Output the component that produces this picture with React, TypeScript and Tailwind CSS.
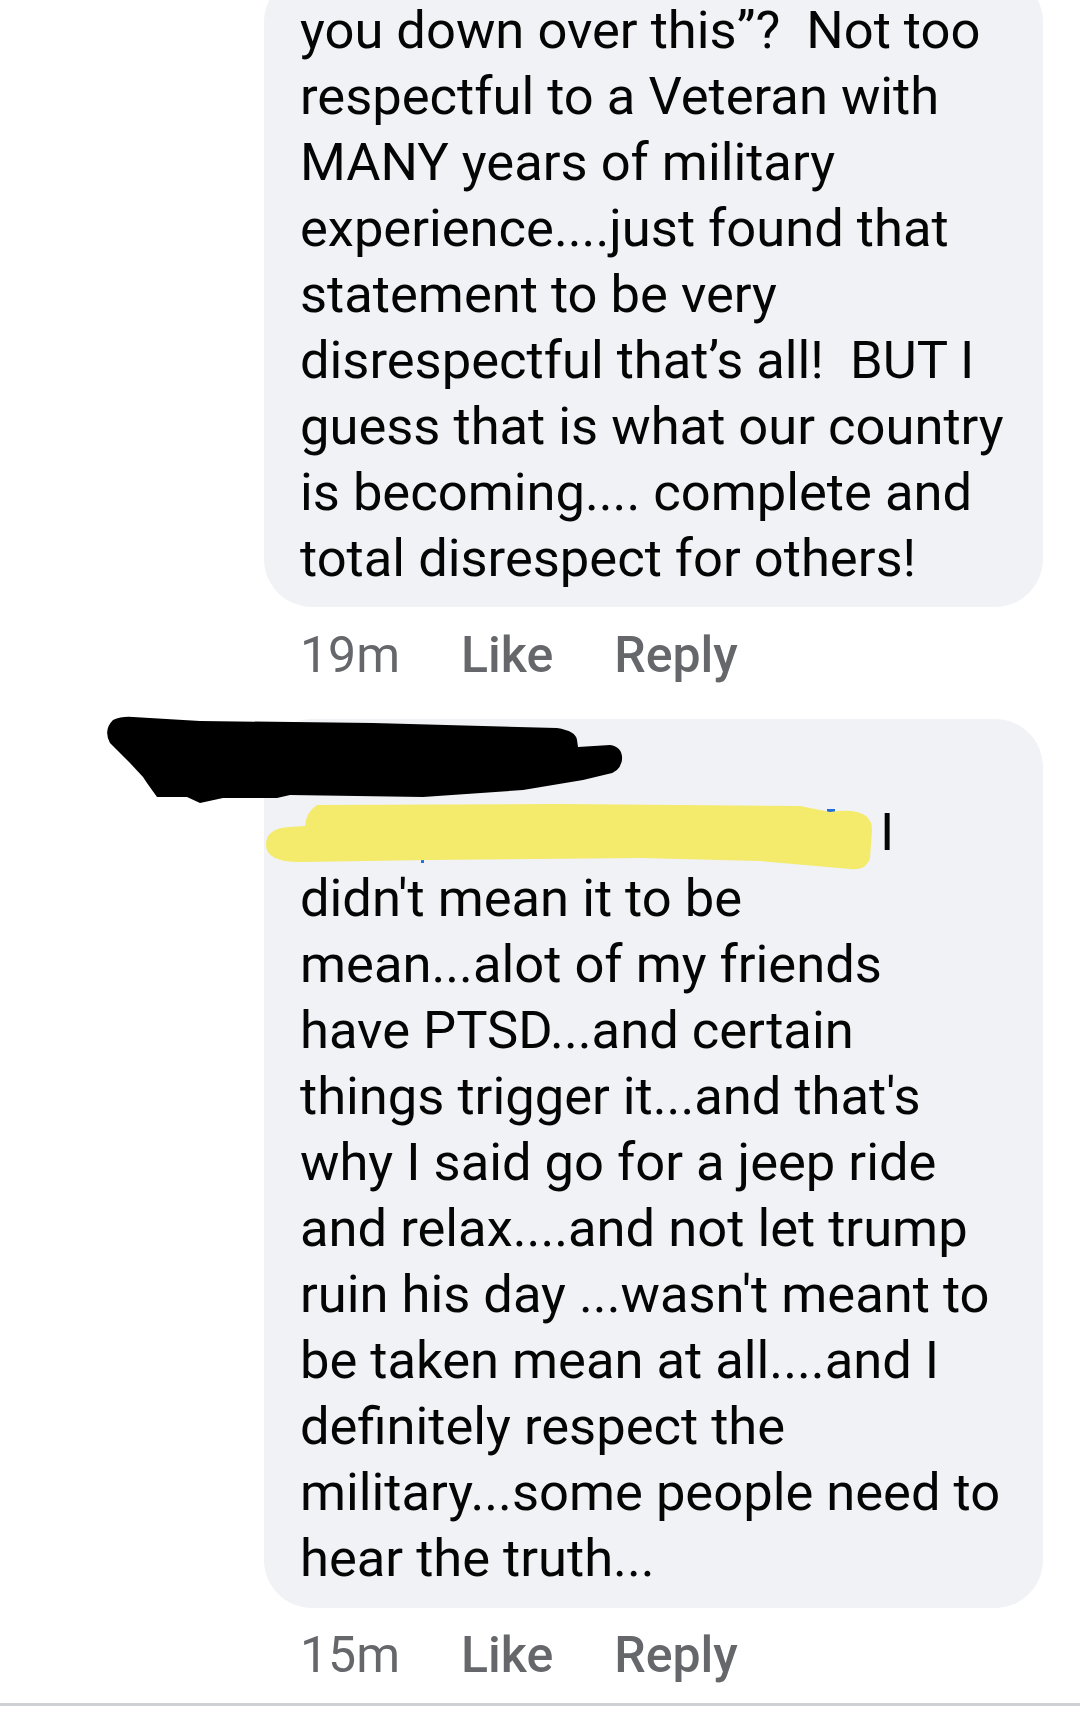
const firstComment = [
  "you down over this\u201d?  Not too",
  "respectful to a Veteran with",
  "MANY years of military",
  "experience....just found that",
  "statement to be very",
  "disrespectful that\u2019s all!  BUT I",
  "guess that is what our country",
  "is becoming.... complete and",
  "total disrespect for others!",
];

const secondComment = [
  "didn't mean it to be",
  "mean...alot of my friends",
  "have PTSD...and certain",
  "things trigger it...and that's",
  "why I said go for a jeep ride",
  "and relax....and not let trump",
  "ruin his day ...wasn't meant to",
  "be taken mean at all....and I",
  "definitely respect the",
  "military...some people need to",
  "hear the truth...",
];

function MetaRow({ time, className }: { time: string; className: string }) {
  return (
    <div className={`flex gap-[61px] pl-[36px] text-[50px] leading-[66px] text-[#65676b] ${className}`}>
      <span>{time}</span>
      <span className="font-medium">Like</span>
      <span className="font-medium">Reply</span>
    </div>
  );
}

// hand-drawn redactions sitting on top of the screenshot
function Redactions() {
  return (
    <svg className="pointer-events-none absolute inset-0" width="1080" height="1712" viewBox="0 0 1080 1712">
      <rect x="827" y="809" width="8" height="3" fill="#216fdb" />
      <rect x="421" y="856" width="3" height="7" fill="#216fdb" />
      <path
        d="M317 805 L560 804 L800 806 L830 812 Q872 806 872 830 L870 858 Q866 871 850 869 L760 861 L640 858 L430 860 L300 862 Q266 862 266 845 Q266 828 290 827 L305 826 Q306 812 317 805 Z"
        fill="#f4ea6b"
      />
      <path
        d="M113 720 Q122 716 133 717 L200 721 L373 723 L557 728 Q576 731 577 740 L578 747 L610 745 Q623 747 622 760 Q620 772 608 774 L583 780 L523 790 L423 797 L290 795 L277 798 L223 798 L200 803 L187 797 L157 797 L147 783 L143 777 L130 763 L110 743 Q103 730 113 720 Z"
        fill="#000000"
      />
    </svg>
  );
}

export default function App() {
  return (
    <main className="relative h-[1712px] w-[1080px] overflow-hidden bg-white font-['Roboto',sans-serif] text-[#050505]">
      <section className="flex flex-col pl-[264px] pr-[37px]">
        <article className="-mt-[26px] rounded-[48px] bg-[#f0f2f5] pb-[16px] pl-[36px] pr-[16px] pt-[23px] text-[52.5px] leading-[66px]">
          {firstComment.map((line) => (
            <span key={line} className="block whitespace-pre">
              {line}
            </span>
          ))}
        </article>
        <MetaRow time="19m" className="mt-[15px]" />

        <article className="mt-[31px] rounded-[48px] bg-[#f0f2f5] pb-[17px] pl-[36px] pr-[16px] pt-[80px] text-[52.5px] leading-[66px]">
          <span className="block whitespace-pre">
            <span className="inline-block w-[580px] text-[#216fdb]"> </span>I
          </span>
          {secondComment.map((line) => (
            <span key={line} className="block whitespace-pre">
              {line}
            </span>
          ))}
        </article>
        <MetaRow time="15m" className="mt-[14px]" />
      </section>
      <div className="mt-[15px] h-[3px] bg-[#ced0d4]" />
      <Redactions />
    </main>
  );
}
